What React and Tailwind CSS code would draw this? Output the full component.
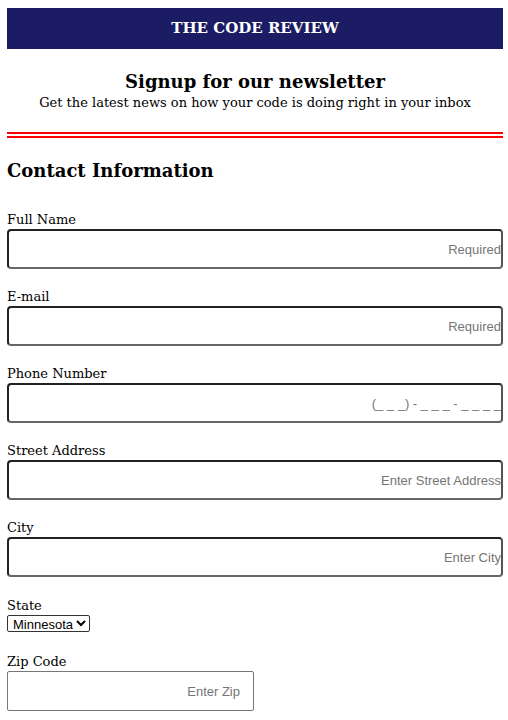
import React from 'react'

const serif = { fontFamily: '"DejaVu Serif", serif' }
const sans = { fontFamily: '"Liberation Sans", Arial, sans-serif' }

const Field = ({ label, placeholder }) => (
  <div className="flex flex-col">
    <label className="text-[13px] leading-[18px] text-black">{label}</label>
    <input
      placeholder={placeholder}
      className="h-[40px] w-full rounded-[4px] border-2 border-t-[#222] border-l-[#222] border-r-[#555] border-b-[#666] bg-white text-right text-[13px] placeholder:text-[#757575] outline-none"
      style={sans}
    />
  </div>
)

const App = () => {
  return (
    <div className="min-h-[720px] bg-white pl-[7px] pr-[5px] pt-[8px]" style={serif}>
      {/* Masthead */}
      <div className="flex h-[41px] items-center justify-center bg-[#1b1c63]">
        <h1 className="text-[15px] font-bold text-white">THE CODE REVIEW</h1>
      </div>

      {/* Intro */}
      <div className="mt-[20px] flex flex-col items-center text-black">
        <h2 className="text-[18px] font-bold leading-[26px]">Signup for our newsletter</h2>
        <p className="text-[13px] leading-[16px]">Get the latest news on how your code is doing right in your inbox</p>
      </div>

      <div className="mt-[21px] h-[2px] bg-[#f00]" />
      <div className="mt-[2px] h-[2px] bg-[#f00]" />

      <h3 className="mt-[20px] text-[18px] font-bold leading-[26px] text-black">Contact Information</h3>

      <div className="mt-[27px] flex flex-col gap-[19px]">
        <Field label="Full Name" placeholder="Required" />
        <Field label="E-mail" placeholder="Required" />
        <Field label="Phone Number" placeholder="(_ _ _) - _ _ _ - _ _ _ _" />
        <Field label="Street Address" placeholder="Enter Street Address" />
        <Field label="City" placeholder="Enter City" />
        <div className="mt-[1px] flex flex-col items-start">
          <label className="text-[13px] leading-[18px]">State</label>
          <select
            defaultValue="Minnesota"
            className="h-[17px] rounded-[2px] border border-[#333] bg-white pl-[1px] text-[13px] leading-[15px]"
            style={sans}
          >
            <option>Minnesota</option>
            <option>Wisconsin</option>
            <option>Iowa</option>
          </select>
        </div>
        <div className="mt-[2px] flex flex-col items-start">
          <label className="text-[13px] leading-[18px]">Zip Code</label>
          <input
            placeholder="Enter Zip"
            className="h-[40px] w-[247px] rounded-[2px] border border-[#767676] bg-white pr-[13px] text-right text-[13px] placeholder:text-[#757575] outline-none"
            style={sans}
          />
        </div>
      </div>
    </div>
  )
}

export default App
